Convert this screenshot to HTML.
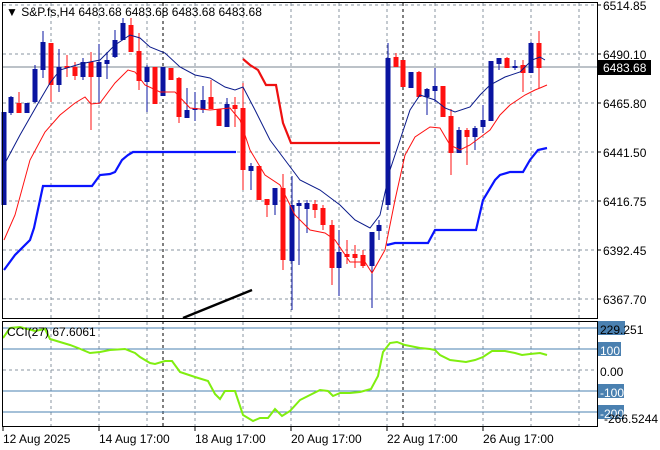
<!DOCTYPE html>
<html><head><style>
body{margin:0;background:#fff;width:660px;height:450px;overflow:hidden}
svg{position:absolute;left:0;top:0;font-family:"Liberation Sans",sans-serif;font-size:12px}
</style></head><body>
<svg id="s" width="660" height="450" xmlns="http://www.w3.org/2000/svg">
<rect width="660" height="450" fill="#fff"/>
<g id="grid" stroke="#8a94a0" stroke-dasharray="3,3" stroke-width="1"></g>
<g id="ind"></g>
<g id="c"></g>
<polyline fill="none" stroke="#0a1a8a" stroke-width="1" points="4,165 20,135 40,100 50,83 60,70 80,64 100,60 115,45 130,35 140,38 150,47 165,53 180,67 195,75 210,78 225,87 235,90 243,87 255,110 270,140 285,160 300,180 320,190 340,205 355,220 370,228 380,215 390,170 400,140 410,110 420,95 435,100 445,108 455,112 470,107 480,95 490,85 505,77 520,72 532,60 540,57 545,60"/>
<polyline fill="none" stroke="#ff1010" stroke-width="1" points="4,240 15,215 30,160 45,132 60,115 75,103 85,97 91,104 100,103 115,83 128,70 135,72 145,85 160,92 175,92 190,108 210,110 230,108 240,120 250,150 265,175 280,185 295,215 310,230 325,233 335,240 350,262 365,262 372,273 385,250 395,200 405,155 415,137 430,127 440,128 450,145 460,150 470,145 490,130 500,115 510,105 525,95 535,90 540,88 547,85"/>
<polyline fill="none" stroke="#0a14ff" stroke-width="2.2" points="4,270 15,255 30,240 34,228 43,186 92,186 100,175 110,174 115,172 122,160 128,155 133,152 236,152"/>
<polyline fill="none" stroke="#0a14ff" stroke-width="2.2" points="387,245 395,243 428,243 435,230 476,230 483,200 495,180 500,175 510,172 523,172 530,160 538,150 547,148"/>
<polyline fill="none" stroke="#ee1010" stroke-width="2.2" points="243,59 250,65 258,70 266,85 276,85 283,123 291,143 380,143"/>
<line x1="183" y1="318" x2="252" y2="290" stroke="#000" stroke-width="2.5"/>
<polyline fill="none" stroke="#80ee10" stroke-width="2" points="3,338 10,328 20,327 35,331 45,329 50,339 70,345 78,348 90,353 100,352 110,350 125,349 135,353 140,357 150,363 155,364 165,361 172,361 180,372 195,377 208,381 215,394 220,399 225,391 235,391 243,415 253,421 260,418 268,418 275,409 282,416 290,411 300,400 310,395 320,390 328,391 333,396 340,393 350,393 360,392 371,389 378,376 383,352 390,343 397,342 405,345 420,348 430,349 435,350 440,355 450,360 458,361 466,362 475,360 483,357 492,351 505,351 515,353 522,355 530,354 540,353 547,355"/>
<rect x="2.5" y="2.5" width="595" height="316" fill="none" stroke="#000"/>
<rect x="2.5" y="321.5" width="595" height="105" fill="none" stroke="#000"/>
<text x="6" y="16" font-size="12">▼ S&amp;P.fs,H4  6483.68 6483.68 6483.68 6483.68</text>
<text x="7" y="336" font-size="12">CCI(27) 67.6061</text>
<g id="lab"></g>
</svg>
<script>
var s='http://www.w3.org/2000/svg';
function el(p,t,a,tx){var e=document.createElementNS(s,t);for(var k in a)e.setAttribute(k,a[k]);if(tx)e.textContent=tx;document.getElementById(p).appendChild(e);return e;}
// grid
for(var x=51;x<=579;x+=48){el('grid','line',{x1:x,y1:3,x2:x,y2:318});el('grid','line',{x1:x,y1:322,x2:x,y2:426});}
[5,54,103,152,201,250,299].forEach(function(y){el('grid','line',{x1:3,y1:y,x2:597,y2:y});});
el('grid','line',{x1:3,y1:370,x2:597,y2:370});
[163,403].forEach(function(x){el('grid','line',{x1:x,y1:3,x2:x,y2:426,stroke:'#000'});});
el('grid','line',{x1:3,y1:67,x2:597,y2:67,stroke:'#7a8490','stroke-dasharray':'none'});
[328,349,391,412].forEach(function(y){el('ind','line',{x1:3,y1:y,x2:597,y2:y,stroke:'#4a80b0'});});
// candles: x, top, bottom, high, low, color
var B='#0a14a0',R='#ff1010';
var C=[[4,112,205,112,205,B],[11,97,113,96,115,B],[19,103,113,92,113,R],[27,103,113,103,113,B],[35,69,102,65,103,B],[43,42,70,31,78,B],[51,43,85,43,102,R],[59,67,85,49,92,B],[67,66,68,55,77,R],[75,67,76,62,80,R],[83,62,77,58,80,B],[91,62,77,52,130,R],[99,62,77,44,104,B],[107,60,64,52,79,B],[115,40,57,30,58,B],[123,23,40,18,40,B],[131,25,52,18,52,R],[139,51,81,33,90,R],[147,67,82,65,112,B],[155,67,104,67,104,R],[163,67,96,67,96,B],[171,68,80,68,80,R],[179,78,117,77,123,R],[187,110,118,88,118,B],[195,108,110,92,121,B],[203,100,110,86,113,B],[211,97,109,80,109,R],[219,109,126,109,126,R],[227,104,127,98,127,B],[235,105,109,97,127,R],[243,108,170,83,190,R],[251,166,171,163,190,B],[259,166,200,166,200,R],[267,199,205,199,217,R],[275,188,205,188,215,B],[283,188,260,174,270,R],[292,205,261,176,310,B],[299,203,206,200,265,B],[307,203,209,200,233,B],[315,204,210,200,218,R],[323,208,225,205,230,R],[332,225,268,220,285,R],[339,252,268,230,296,B],[347,254,257,240,264,R],[355,254,258,245,268,R],[363,255,266,250,268,R],[372,232,266,232,308,B],[379,225,231,220,240,B],[388,58,205,43,210,B],[396,57,67,53,67,R],[403,60,87,60,87,R],[411,72,88,72,88,B],[419,72,97,71,97,R],[427,89,97,88,115,B],[435,86,91,68,102,B],[443,86,117,86,117,R],[451,116,153,109,175,R],[459,130,153,127,153,B],[467,130,137,128,165,R],[475,128,137,126,150,B],[483,120,127,105,133,B],[491,61,121,61,121,B],[499,58,64,58,70,B],[507,58,68,57,68,R],[515,66,68,60,70,B],[523,65,73,60,92,R],[531,43,73,42,73,B],[539,43,68,31,88,R]];
C.forEach(function(c){el('c','line',{x1:c[0],y1:c[3],x2:c[0],y2:c[4],stroke:c[5]});el('c','rect',{x:c[0]-2.5,y:c[1],width:5,height:Math.max(1,c[2]-c[1]),fill:c[5]});});
// axis labels
[[5,'6514.85'],[54,'6490.10'],[103,'6465.80'],[152,'6441.50'],[201,'6416.75'],[250,'6392.45'],[299,'6367.70']].forEach(function(a){el('lab','line',{x1:597,y1:a[0],x2:601,y2:a[0],stroke:'#000'});el('lab','text',{x:603,y:a[0]+5},a[1]);});
el('lab','rect',{x:598,y:60,width:53,height:15,fill:'#000'});
el('lab','text',{x:603,y:72,fill:'#fff'},'6483.68');
[[328,'229.251',27],[349,'100',23],[391,'-100',26],[412,'-200',26]].forEach(function(a){el('lab','rect',{x:598,y:a[0]-7,width:a[2],height:14,fill:'#4a80b0'});});
el('lab','text',{x:600,y:334},'229.251');
el('lab','text',{x:600,y:355,fill:'#fff'},'100');
el('lab','text',{x:600,y:376},'0.00');
el('lab','text',{x:600,y:397,fill:'#fff'},'-100');
el('lab','text',{x:600,y:418,fill:'#fff'},'-200');
el('lab','text',{x:604,y:423},'-266.5244');
[[3,'12 Aug 2025'],[99,'14 Aug 17:00'],[195,'18 Aug 17:00'],[291,'20 Aug 17:00'],[387,'22 Aug 17:00'],[483,'26 Aug 17:00']].forEach(function(a){el('lab','line',{x1:a[0],y1:426,x2:a[0],y2:431,stroke:'#000'});el('lab','text',{x:a[0],y:443},a[1]);});
</script>
</body></html>
